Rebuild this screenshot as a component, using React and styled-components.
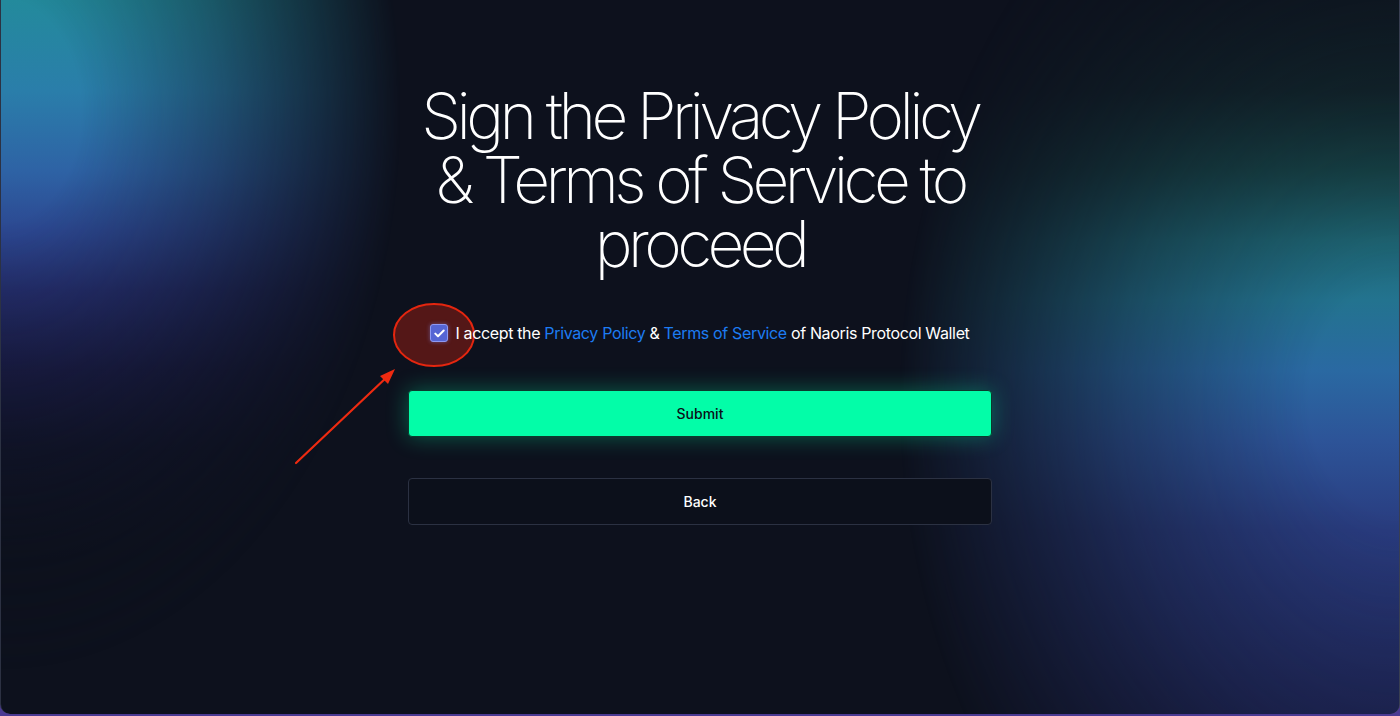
import React, { useState } from 'react'
import styled, { createGlobalStyle } from 'styled-components'

const Global = createGlobalStyle`
  html, body {
    margin: 0;
    padding: 0;
    background: #4b3a93;
  }
  * { box-sizing: border-box; }
`

const Window = styled.div`
  position: relative;
  height: 714px;
  overflow: hidden;
  background: #0d111d;
  border-left: 1px solid rgba(140, 150, 180, 0.25);
  border-right: 1px solid rgba(140, 150, 180, 0.35);
  border-radius: 0 0 10px 10px;
  font-family: Inter, "Noto Sans", sans-serif;
  color: #fff;

  &::before,
  &::after {
    content: "";
    position: absolute;
    top: 0;
    bottom: 0;
    width: 540px;
    pointer-events: none;
  }

  &::before {
    left: 0;
    background: linear-gradient(
      to bottom,
      #238a9c 0px,
      #2a7eaa 90px,
      #2e63a5 170px,
      #2c4891 230px,
      #252f70 290px,
      #1b1d4a 370px,
      #12152e 450px,
      #0d111d 560px
    );
    -webkit-mask-image: radial-gradient(ellipse 400px 560px at 0px 110px, #000 20%, rgba(0,0,0,0.6) 55%, transparent 100%);
    mask-image: radial-gradient(ellipse 400px 560px at 0px 110px, #000 20%, rgba(0,0,0,0.6) 55%, transparent 100%);
  }

  &::after {
    right: 0;
    background: linear-gradient(
      to bottom,
      #0f1c24 0px,
      #12292e 90px,
      #17474a 170px,
      #1e6674 240px,
      #23738f 300px,
      #2a69a2 370px,
      #2d5498 440px,
      #293c7f 530px,
      #232b66 716px
    );
    -webkit-mask-image: radial-gradient(ellipse 500px 640px at 540px 400px, #000 18%, rgba(0,0,0,0.6) 55%, transparent 100%);
    mask-image: radial-gradient(ellipse 500px 640px at 540px 400px, #000 18%, rgba(0,0,0,0.6) 55%, transparent 100%);
  }
`

const Content = styled.main`
  position: relative;
  z-index: 1;
  width: 584px;
  margin: 0 auto;
  padding-top: 84px;
  display: flex;
  flex-direction: column;
  align-items: stretch;
`

const Title = styled.h1`
  margin: 0;
  font-family: Inter, "Noto Sans", sans-serif;
  font-weight: 200;
  font-size: 64px;
  line-height: 64px;
  letter-spacing: -0.072em;
  text-align: center;
  color: #fff;
`

const AcceptRow = styled.label`
  margin-top: 45px;
  height: 24px;
  display: flex;
  align-items: center;
  justify-content: center;
  gap: 7px;
  font-size: 16px;
  letter-spacing: -0.022em;
  color: #fff;
  cursor: pointer;
`

const Box = styled.span`
  width: 18px;
  height: 18px;
  border-radius: 3px;
  border: 1.5px solid #8e99f2;
  background: ${p => (p.$checked ? '#5565d4' : 'transparent')};
  box-shadow: 0 0 4px rgba(140, 150, 255, 0.45);
  display: flex;
  align-items: center;
  justify-content: center;
  flex-shrink: 0;
`

const Link = styled.a`
  color: #1d7cf2;
  text-decoration: none;
`

const Button = styled.button`
  height: 47px;
  width: 100%;
  border-radius: 4px;
  font-family: Inter, "Noto Sans", sans-serif;
  font-size: 14px;
  font-weight: 500;
  cursor: pointer;
  border: 1px solid ${p => (p.$primary ? '#0a3b2d' : '#2b3142')};
  background: ${p => (p.$primary ? '#03fda8' : '#0c101b')};
  color: ${p => (p.$primary ? '#0b0f18' : '#ffffff')};
  box-shadow: ${p => (p.$primary ? '0 0 22px rgba(0, 255, 170, 0.32)' : 'none')};
  margin-top: ${p => p.$gap}px;
`

// screenshot markup drawn on top of the page background, under the form
const Annotation = styled.svg`
  position: absolute;
  inset: 0;
  z-index: 0;
  pointer-events: none;
`

export default function App() {
  const [checked, setChecked] = useState(true)

  return (
    <>
      <Global />
      <Window>
        <Annotation width="1400" height="714" viewBox="0 0 1400 714">
          <ellipse cx="433" cy="335" rx="40" ry="31" fill="rgba(200, 34, 14, 0.38)" stroke="#e4260f" strokeWidth="2" />
          <line x1="295" y1="463" x2="387" y2="376" stroke="#ee2a10" strokeWidth="2.2" strokeLinecap="round" />
          <polygon points="394,369 379,376 387,384" fill="#ee2a10" />
        </Annotation>
        <Content>
          <Title>Sign the Privacy Policy &amp; Terms of Service to proceed</Title>
          <AcceptRow onClick={() => setChecked(!checked)}>
            <Box $checked={checked}>
              {checked && (
                <svg width="11" height="9" viewBox="0 0 11 9">
                  <path d="M1.3 4.6 L4 7.2 L9.7 1.5" fill="none" stroke="#fff" strokeWidth="2" strokeLinecap="round" strokeLinejoin="round" />
                </svg>
              )}
            </Box>
            <span>
              I accept the <Link href="#">Privacy Policy</Link> &amp; <Link href="#">Terms of Service</Link> of Naoris Protocol Wallet
            </span>
          </AcceptRow>
          <Button $primary $gap={45}>Submit</Button>
          <Button $gap={41}>Back</Button>
        </Content>
      </Window>
    </>
  )
}
